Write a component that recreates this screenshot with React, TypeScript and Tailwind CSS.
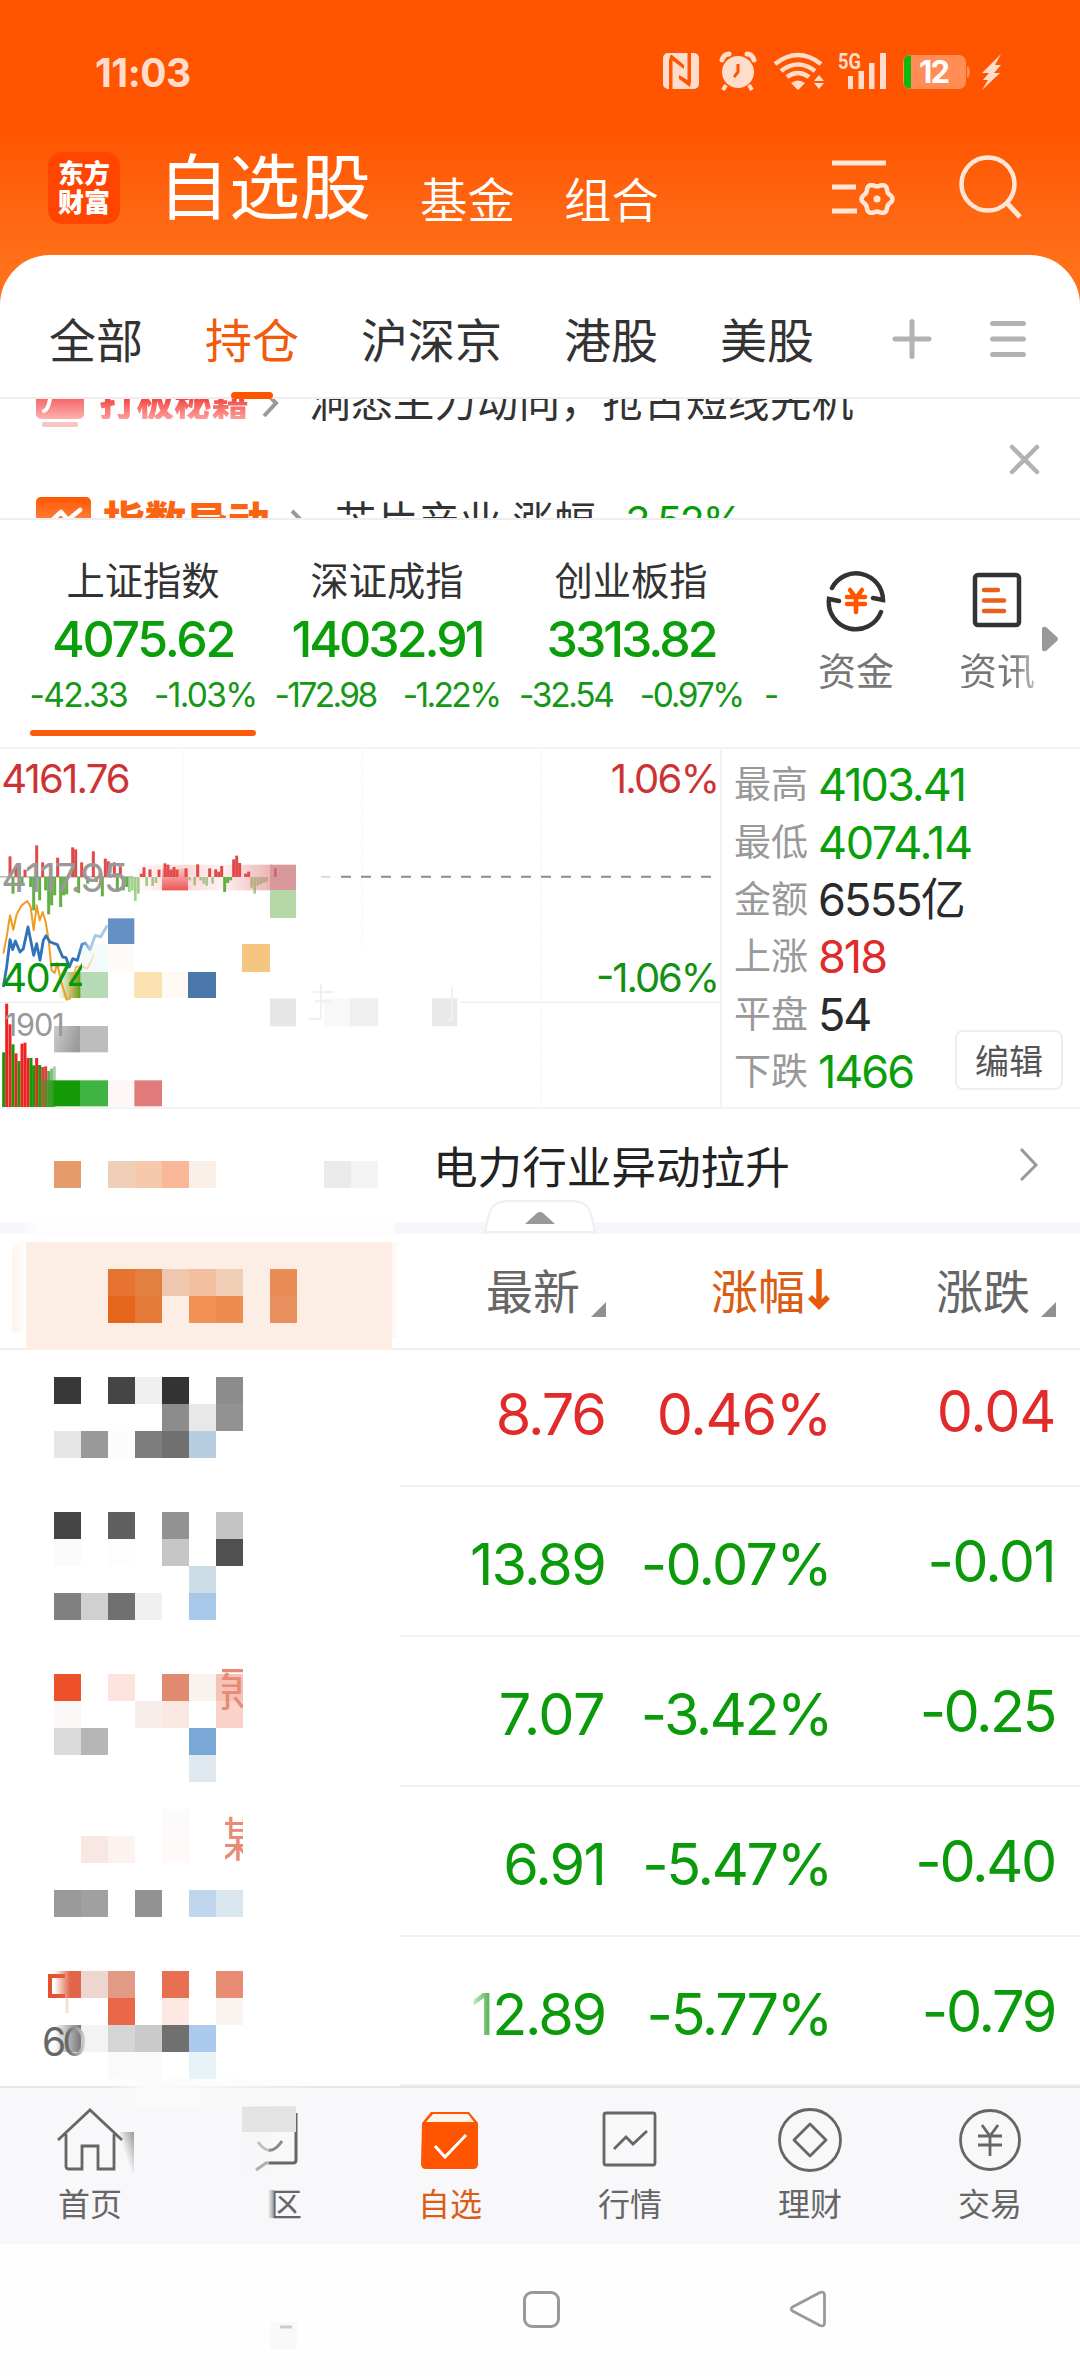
import React from "react";

type Cell = [col: number, row: number, color: string];

const CJK = "font-['Noto_Sans_CJK_SC',sans-serif]";
const NUM = "font-['Inter','Noto_Sans_CJK_SC',sans-serif]";

/* Square tiles on a 27px page grid; x/y is the page position of the drawing's corner. */
function Mosaic({ x, y, w, h, cells, children }: { x: number; y: number; w: number; h: number; cells: Cell[]; children?: React.ReactNode }) {
  return (
    <svg width={w} height={h} viewBox={`${x} ${y} ${w} ${h}`} className="block shrink-0">
      {cells.map(([c, r, color]) => (
        <rect key={`${c}-${r}`} x={c * 27} y={r * 27} width={27} height={27} fill={color} />
      ))}
      {children}
    </svg>
  );
}

function StatusBar() {
  return (
    <div className="flex h-[144px] items-center pl-[95px] text-[#ffdccb]">
      <span className={`${NUM} w-[568px] text-[39px] leading-none font-bold tracking-[-0.5px]`}>11:03</span>
      <svg width="345" height="44" viewBox="663 51 345 44" fill="currentColor">
        <path fillRule="evenodd" d="M668 54h26a5 5 0 0 1 5 5v26a5 5 0 0 1-5 5h-26a5 5 0 0 1-5-5V59a5 5 0 0 1 5-5zm1 7v29h3.500V61.500L684 70v-4l-12-10h-1.500zM691 83V54h-3.500v27L679 76v4l11 8z" />
        <circle cx="738" cy="73" r="16" />
        <path d="M726 86l-3 5M749 86l3 5" stroke="currentColor" strokeWidth="4" />
        <path d="M722 61q2-6 7-6M754 61q-2-6-7-6" stroke="currentColor" strokeWidth="5" fill="none" strokeLinecap="round" />
        <path d="M738 65v8l-4 5" stroke="#ff5500" strokeWidth="3" fill="none" />
        <g fill="none" stroke="currentColor" strokeWidth="4.500">
          <path d="M775 65q23-18 46 0M781 72q17-13 34 0M787 78q11-8 22 0" />
        </g>
        <path d="M791 84q7-5 14 0l-7 7zM814 82l5-6 5 6zM814 84l5 6 5-6z" />
        <text x="838" y="70" fontSize="22" fontWeight="700" fontFamily="Roboto" textLength="23" lengthAdjust="spacingAndGlyphs">5G</text>
        <path d="M848 77h5v13h-5zM858.500 72h5.500v18h-5.500zM869 64h5.500v26H869zM880 54h6v36h-6z" />
        <rect x="903" y="56" width="63" height="34" rx="7" fill="#ff8d55" />
        <path d="M967 67q3 1 3 6t-3 6z" fill="#ff8d55" />
        <path d="M911 56.500v33h-2a5 5 0 0 1-5-5v-23a5 5 0 0 1 5-5z" fill="#0fb80f" />
        <text x="934.500" y="84" textAnchor="middle" fontSize="31" fontWeight="700" fontFamily="Inter" textLength="31" fill="#fff">12</text>
        <path d="M1001 55l-19 19h7l-6 7h5l-6 10 18-17h-6l7-8h-6z" />
      </svg>
    </div>
  );
}

/* Six-lobed outline of the settings wheel, centred on (876, 199). */
const gear = Array.from({ length: 72 }, (_, i) => {
  const a = (i * Math.PI) / 36;
  const r = 14 + 1.5 * Math.cos(6 * a);
  return `${(876 + r * Math.cos(a)).toFixed(2)},${(199 + r * Math.sin(a)).toFixed(2)}`;
}).join(" ");

function TitleBar() {
  return (
    <div className={`${CJK} flex h-[111px] text-white`}>
      <div className="mt-2 ml-12 flex h-[72px] w-[72px] flex-col items-center justify-center rounded-[14px] bg-[#ff4500] pb-1 text-[26px] leading-[29px] font-black">
        <span>东方</span>
        <span>财富</span>
      </div>
      <span className="mt-[3px] ml-[38px] text-[71px] leading-none font-normal">自选股</span>
      <span className="mt-[30px] ml-[49px] text-[47.500px] leading-none font-[350]">基金</span>
      <span className="mt-[30px] ml-[49px] text-[47.500px] leading-none font-[350]">组合</span>
      <svg className="mt-2 ml-[171px]" width="200" height="72" viewBox="829 152 200 72" fill="none" stroke="#ffe6d6" strokeWidth="4.500">
        <path d="M831 163h54M831 187h24M831 211h25" strokeWidth="5" />
        <polygon points={gear} strokeWidth="4.500" strokeLinejoin="round" />
        <circle cx="876" cy="199" r="3.500" fill="#ffe6d6" stroke="none" />
        <circle cx="987" cy="184" r="26.500" />
        <path d="M1006 203l13 14" strokeWidth="5" />
      </svg>
    </div>
  );
}

function Tabs() {
  const tabs = ["全部", "持仓", "沪深京", "港股", "美股"];
  return (
    <div className={`${CJK} flex h-[144px] rounded-t-[50px] border-b-2 border-[#eeeeee] bg-white pl-[49px]`}>
      <div className="flex gap-[62px] pt-[59px] text-[47px] leading-none">
        {tabs.map((t) => (
          <div key={t} className={t === "持仓" ? "flex flex-col items-center text-[#f25a0c]" : "text-[#333333]"}>
            <span>{t}</span>
            {t === "持仓" && <span className="mt-[31px] h-[7px] w-[42px] shrink-0 rounded-full bg-[#ff5500]" />}
          </div>
        ))}
      </div>
      <svg className="mt-[60px] ml-[76px]" width="140" height="50" viewBox="890 315 140 50" stroke="#b2b2b2" strokeWidth="5" strokeLinecap="round">
        <path d="M895 339h34M912 321.500v35M992.500 323.500h31M992.500 339h31M992.500 354.500h31" />
      </svg>
    </div>
  );
}

/* Vertical news carousel caught between two entries, so both lines are cut by the frame. */
function Carousel() {
  return (
    <div className={`${CJK} relative h-[121px] overflow-hidden border-b-2 border-[#eeeeee] bg-white text-[#333333]`}>
      <div className="absolute top-[-19px] left-9 flex h-[48px] items-center text-[41.700px] leading-none">
        <svg width="50" height="48" viewBox="0 0 50 48">
          <defs>
            <linearGradient id="rose" x1="0" y1="0" x2="0" y2="1">
              <stop offset="0.3" stopColor="#f05050" />
              <stop offset="1" stopColor="#ffb0b0" />
            </linearGradient>
          </defs>
          <rect width="48" height="39" rx="5" fill="url(#rose)" />
          <path d="M8 31q4-1 6-12" stroke="#fff" strokeWidth="4" fill="none" strokeLinecap="round" />
          <rect x="6" y="42" width="36" height="5" rx="2" fill="#f9c4c4" />
        </svg>
        <span className="mt-[-8px] ml-[13px] bg-linear-to-b from-[#ee3535] from-40% to-[#ff9c9c] bg-clip-text text-[37.500px] font-black text-transparent">打板秘籍</span>
        <svg className="ml-3" width="20" height="40" viewBox="0 0 20 40" fill="none" stroke="#999" strokeWidth="4">
          <path d="M3 7l12 12L3 32" />
        </svg>
        <span className="mt-[-9px] ml-[28px] tracking-[0.2px]">洞悉主力动向，抢占短线先机</span>
      </div>
      <div className="absolute top-[98px] left-9 flex text-[41.700px] leading-none">
        <svg width="55" height="50" viewBox="0 0 55 50">
          <defs>
            <linearGradient id="amber" x1="0" y1="0" x2="0" y2="1">
              <stop offset="0" stopColor="#ff5500" />
              <stop offset="1" stopColor="#ffb080" />
            </linearGradient>
          </defs>
          <rect width="55" height="50" rx="5" fill="url(#amber)" />
          <path d="M12 27L25 15l7 8 12-10" stroke="#fff" strokeWidth="4.500" fill="none" strokeLinecap="round" strokeLinejoin="round" />
        </svg>
        <span className="ml-[12px] pt-[2px] font-black text-[#fb6411]">指数异动</span>
        <svg className="mt-[7px] ml-[19px]" width="20" height="40" viewBox="0 0 20 40" fill="none" stroke="#999" strokeWidth="4">
          <path d="M3 7l13 13L3 33" />
        </svg>
        <span className="ml-[26px] pt-[2px]">芯片产业</span>
        <span className="ml-[11px] pt-[2px]">涨幅</span>
        <span className={`${NUM} ml-[13px] pt-[4px] text-[41px] tracking-[-2px] text-[#089c08]`}>-3.52%</span>
      </div>
      <svg className="absolute top-[43px] left-[1006px]" width="37" height="37" viewBox="0 0 37 37" stroke="#b2b2b2" strokeWidth="4.500" strokeLinecap="round">
        <path d="M6 5l25 25M31 5L6 30" />
      </svg>
    </div>
  );
}

const indices = [
  { name: "上证指数", value: "4075.62", diff: "-42.33", pct: "-1.03%", active: true, track: "tracking-[-2.300px]", small: "tracking-[-1.700px]" },
  { name: "深证成指", value: "14032.91", diff: "-172.98", pct: "-1.22%", active: false, track: "tracking-[-3px]", small: "tracking-[-2.600px]" },
  { name: "创业板指", value: "3313.82", diff: "-32.54", pct: "-0.97%", active: false, track: "tracking-[-3px]", small: "tracking-[-2.300px]" },
];

function Indices() {
  return (
    <div className="flex h-[229px] border-b-2 border-[#f3f3f3] bg-white pl-[21px]">
      <div className="flex w-[754px]">
        {indices.map((i) => (
          <div key={i.name} className="flex w-[244px] shrink-0 flex-col items-center pt-[40px]">
            <span className={`${CJK} text-[38.300px] leading-none text-[#333333]`}>{i.name}</span>
            <span className={`${NUM} mt-[16px] text-[50px] leading-none font-medium text-[#0a9e0a] ${i.track}`}>{i.value}</span>
            <span className={`${NUM} mt-[15px] flex gap-[27px] text-[33.500px] leading-none text-[#159815] ${i.small}`}>
              <span>{i.diff}</span>
              <span>{i.pct}</span>
            </span>
            {i.active && <span className="mt-[17px] h-[6px] w-[226px] rounded-full bg-[#fa5a0a]" />}
          </div>
        ))}
        <span className={`${NUM} mt-[159px] ml-[11px] text-[33px] leading-none text-[#159815]`}>-</span>
      </div>
      <div className={`${CJK} flex pt-[48px] text-[38px] leading-none text-[#777777]`}>
        <div className="ml-[43px] flex w-[76px] flex-col items-center">
          <svg width="64" height="64" viewBox="824 569 64 64" fill="none" stroke="#333" strokeWidth="4.500" strokeLinecap="round">
            <path d="M832 589A27 27 0 0 1 883 601l-10-2M881 613A27 27 0 0 1 829 600l10 2" />
            <path d="M850 591l6 8 6-8M847 598h18M847 605h18M856 599v14" stroke="#ff5500" strokeWidth="4.500" />
          </svg>
          <span className="mt-[18px]">资金</span>
        </div>
        <div className="ml-[65px] flex w-[76px] flex-col items-center">
          <svg width="64" height="64" viewBox="965 569 64 64" fill="none" stroke="#333" strokeWidth="4.500" strokeLinecap="round">
            <rect x="975" y="576" width="44" height="50" rx="3" />
            <path d="M984 591h14M984 601.500h20M984 612h20" stroke="#e8601c" strokeWidth="4.500" />
          </svg>
          <span className="mt-[18px] bg-linear-to-r from-[#777777] from-70% to-[#bbbbbb] bg-clip-text text-transparent">资讯</span>
        </div>
        <svg className="mt-[57px] ml-[7px]" width="16" height="28" viewBox="0 0 16 28" fill="#999">
          <path d="M0 4q0-3 4-2l11 10q2 2 0 4L4 26q-4 1-4-2z" />
        </svg>
      </div>
    </div>
  );
}

/* Chart data, in thirds of a pixel. */
const ups = [[30, 348], [48, 380], [57, 375], [75, 388], [110, 315], [128, 366], [173, 352], [218, 321], [227, 327], [245, 366], [280, 333], [316, 355], [325, 363], [343, 366], [361, 378], [424, 400], [432, 381], [450, 387], [477, 388], [495, 369], [504, 373], [513, 388], [522, 380], [531, 388], [558, 384], [593, 372], [629, 384], [647, 387], [656, 394], [665, 377], [701, 357], [710, 346], [719, 368], [737, 400], [746, 394]];
const downs = [[39, 460], [66, 430], [92, 440], [101, 510], [119, 480], [137, 450], [146, 522], [155, 495], [164, 465], [182, 500], [191, 465], [200, 462], [236, 458], [263, 430], [289, 425], [307, 468], [352, 455], [370, 450], [380, 440], [674, 455], [683, 428], [692, 420]];
const faint = [[388, 455], [397, 450], [406, 482], [415, 460], [440, 437], [458, 437], [468, 428], [569, 420], [584, 435], [602, 420], [611, 430], [620, 436], [638, 430], [755, 442], [764, 460], [773, 436], [782, 432], [791, 428], [800, 424]];
const volumes: [number, number, string][] = [[11, 936, "#149a06"], [20, 790, "#ee2222"], [30, 852, "#ee2222"], [39, 912, "#149a06"], [48, 939, "#ee2222"], [57, 962, "#149a06"], [66, 910, "#ee2222"], [75, 907, "#ee2222"], [84, 953, "#ee2222"], [93, 953, "#149a06"], [101, 975, "#149a06"], [110, 953, "#ee2222"], [119, 974, "#149a06"], [128, 980, "#e04040"], [137, 978, "#e04040"], [146, 992, "#55ad55"], [155, 985, "#77bd77"], [163, 978, "#a5d5a5"]];
const tiles: [number, number, number, number, string][] = [
  [810, 373, 78, 77, "#d9999b"], [810, 449, 78, 84, "#b5d8a8"], [324, 534, 79, 77, "#6490c4"], [726, 611, 84, 84, "#f4c680"],
  [243, 611, 81, 84, "#f3fafa"], [324, 611, 79, 84, "#fefaf7"], [240, 695, 84, 78, "#b5dab5"], [403, 695, 83, 78, "#f9e2b0"],
  [486, 695, 78, 78, "#fef9f2"], [564, 695, 84, 78, "#4a78aa"], [810, 774, 78, 84, "#e6e6e6"], [972, 774, 78, 84, "#f8f8f8"],
  [1050, 774, 84, 84, "#efefef"], [1296, 774, 76, 84, "#e9e9e9"], [240, 857, 84, 79, "#bdbdbd"], [162, 1020, 78, 78, "#149a06"],
  [240, 1020, 84, 78, "#40b440"], [324, 1020, 79, 78, "#fff7f7"], [403, 1020, 83, 78, "#e27c7c"],
];

function Chart() {
  return (
    <svg width="722" height="358" viewBox="0 26 2166 1074" className="block shrink-0" fontFamily="Inter">
      <defs>
        <linearGradient id="fadeOut" gradientUnits="userSpaceOnUse" x1="200" y1="0" x2="340" y2="0">
          <stop offset="0" stopColor="#2f74b9" />
          <stop offset="0.25" stopColor="#2f74b9" />
          <stop offset="0.5" stopColor="#a9c8e8" />
          <stop offset="1" stopColor="#a9c8e8" />
        </linearGradient>
        <linearGradient id="goldOut" gradientUnits="userSpaceOnUse" x1="200" y1="0" x2="290" y2="0">
          <stop offset="0" stopColor="#f09c20" />
          <stop offset="1" stopColor="#fff0e0" />
        </linearGradient>
        <linearGradient id="blush" x1="0" y1="0" x2="1" y2="0">
          <stop offset="0" stopColor="#f08080" stopOpacity="0" />
          <stop offset="0.4" stopColor="#f08080" stopOpacity="0.3" />
          <stop offset="0.65" stopColor="#f08080" stopOpacity="0.1" />
          <stop offset="1" stopColor="#d9807f" stopOpacity="0.6" />
        </linearGradient>
        <linearGradient id="redTile" x1="0" y1="0" x2="0" y2="1">
          <stop offset="0" stopColor="#ee5555" stopOpacity="0.2" />
          <stop offset="1" stopColor="#ee5555" />
        </linearGradient>
        <linearGradient id="olive" x1="0" y1="0" x2="1" y2="0">
          <stop offset="0" stopColor="#7a9c10" stopOpacity="0" />
          <stop offset="1" stopColor="#6c9c10" />
        </linearGradient>
        <linearGradient id="ash" x1="0" y1="0" x2="1" y2="0.3">
          <stop offset="0" stopColor="#cccccc" />
          <stop offset="1" stopColor="#9c9c9c" />
        </linearGradient>
        <linearGradient id="leaf" x1="0" y1="0" x2="1" y2="0">
          <stop offset="0" stopColor="#4a9a20" stopOpacity="0" />
          <stop offset="1" stopColor="#2a9a18" />
        </linearGradient>
      </defs>
      <g stroke="#ececec" strokeWidth="4">
        <path d="M549 33V370M1086 33V620M1623 33V1098" strokeDasharray="5 5" stroke="#f2f2f2" />
        <path d="M0 786H195M1383 786H2163M2163 28V1102" />
      </g>
      <path d="M1023 409.500H2150" stroke="#8c8c8c" strokeWidth="6" strokeDasharray="30 30" />
      <path d="M963 409.500h28" stroke="#dddddd" strokeWidth="6" />
      <path d="M0 409.500h400" stroke="#aaaaaa" strokeWidth="4" />
      {faint.map(([x, y]) => <rect key={x} x={x - 4} y={410} width={8} height={y - 410} fill="#9fd08c" />)}
      <rect x="390" y="373" width="425" height="77" fill="url(#blush)" />
      <rect x="486" y="385" width="78" height="65" fill="url(#redTile)" />
      {ups.map(([x, y]) => <rect key={x} x={x - 4.500} y={y} width={9} height={410 - y} fill="#e24a4a" />)}
      {downs.map(([x, y]) => <rect key={x} x={x - 4.500} y={410} width={9} height={y - 410} fill="#62b043" />)}
      {volumes.map(([x, y, c]) => <rect key={x} x={x - 4.500} y={y} width={9} height={1102 - y} fill={c} />)}
      {tiles.map(([x, y, w, h, c]) => <rect key={`${x}-${y}`} x={x} y={y} width={w} height={h} fill={c} />)}
      <rect x="822" y="384" width="8" height="26" fill="#cc6668" />
      <rect x="175" y="695" width="66" height="78" fill="url(#olive)" />
      <rect x="162" y="857" width="78" height="79" fill="url(#ash)" />
      <rect x="100" y="1020" width="62" height="80" fill="url(#leaf)" />
      <g fill="none" strokeLinejoin="round">
        <path stroke="url(#goldOut)" strokeWidth="6" d="M10 640L20 590 30 525 40 568 50 522 65 495 82 482 92 500 101 570 110 495 119 540 128 515 137 545 146 600 155 690 164 698 172 668 182 720 200 778 210 775 218 720 228 680 245 678 262 685 275 660 282 640" />
        <path stroke="url(#fadeOut)" strokeWidth="8.500" d="M10 740L20 680 30 598 38 628 46 602 60 635 70 625 84 560 92 600 101 645 110 610 120 660 130 600 138 586 150 605 172 613 188 650 198 652 208 680 218 655 232 660 246 612 256 608 270 628 286 585 302 590 322 555" />
      </g>
      <g fill="none" stroke="#f0f0f0" strokeWidth="6">
        <path d="M963 732V835M940 755h62M945 783h50M925 835h38M1356 740V838M1340 838h16" />
      </g>
      <text x="4" y="158" fontSize="120" textLength="388" fill="#cc3333">4161.76</text>
      <text x="4" y="456" fontSize="120" textLength="380" fill="#999999">4117.95</text>
      <svg x="0" y="640" width="246" height="140" viewBox="0 640 246 140">
        <text x="4" y="755" fontSize="120" textLength="274" fill="#0a960a">4074</text>
      </svg>
      <svg x="0" y="780" width="190" height="140" viewBox="0 780 190 140">
        <text x="14" y="887" fontSize="92" textLength="180" fill="#999999">1901</text>
      </svg>
      <text x="1832" y="158" fontSize="120" textLength="328" fill="#cc3333">1.06%</text>
      <text x="1788" y="756" fontSize="120" textLength="372" fill="#159015">-1.06%</text>
    </svg>
  );
}

const stats = [
  ["最高", "4103.41", "text-[#0a9e0a] tracking-[-2px]"],
  ["最低", "4074.14", "text-[#0a9e0a] tracking-[-1.400px]"],
  ["金额", "6555亿", "text-[#2a2a2a] tracking-[-1.800px]"],
  ["上涨", "818", "text-[#dc2c2c] tracking-[-2px]"],
  ["平盘", "54", "text-[#2a2a2a] tracking-[-2px]"],
  ["下跌", "1466", "text-[#0a9e0a] tracking-[-2px]"],
];

function Market() {
  return (
    <div className="flex h-[358px] bg-white">
      <Chart />
      <div className="relative flex grow flex-col pt-[7px] pl-[12px]">
        {stats.map(([k, v, c]) => (
          <div key={k} className="flex h-[57.400px] items-center">
            <span className={`${CJK} mt-[-4px] w-[84px] text-[37px] leading-none text-[#999999]`}>{k}</span>
            <span className={`${NUM} text-[45px] leading-none ${c}`}>{v}</span>
          </div>
        ))}
        <button className={`${CJK} absolute top-[281px] left-[233px] h-[60px] w-[108px] rounded-[8px] border-2 border-[#eeeeee] bg-white text-[34px] leading-none text-[#555555]`}>编辑</button>
      </div>
    </div>
  );
}

function NewsRow() {
  return (
    <div className="relative flex h-[127px] border-t-2 border-b-12 border-t-[#f3f3f3] border-b-[#f5f7fa] bg-white">
      <Mosaic x={0} y={1109} w={433} h={113} cells={[[2, 43, "#e59a6a"], [4, 43, "#efcfb8"], [5, 43, "#f6c8ac"], [6, 43, "#f8b898"], [7, 43, "#faefe6"], [12, 43, "#eaeaea"], [13, 43, "#f3f3f3"]]} />
      <span className={`${CJK} mt-[34px] w-[587px] text-[44.600px] leading-none text-[#222222]`}>电力行业异动拉升</span>
      <svg className="mt-[37px]" width="20" height="38" viewBox="0 0 20 38" fill="none" stroke="#999" strokeWidth="3">
        <path d="M1 3l15 16L1 34" />
      </svg>
      <svg className="absolute top-[91px] left-[484px]" width="112" height="34" viewBox="0 0 112 34">
        <path d="M1 32L5 14Q9 1 24 1h64q15 0 19 13l4 18z" fill="#fff" stroke="#efefef" strokeWidth="2" />
        <path d="M41 24l12-11q3-2 6 0l12 11z" fill="#999" />
      </svg>
      <div className="absolute top-[107px] left-[20px] h-[20px] w-[375px] bg-linear-to-r from-transparent via-[#fdfdfd] via-5% to-[#fdfdfd] to-98%" />
    </div>
  );
}

function Corner() {
  return (
    <svg width="15" height="15" viewBox="0 0 15 15" className="mt-[48px]" fill="#8f8f94">
      <path d="M15 0v15H0z" />
    </svg>
  );
}

function TableHead() {
  return (
    <div className={`${CJK} flex h-[116px] border-b-2 border-[#efefef] bg-white text-[47px] leading-none text-[#666666]`}>
      <div className="-mb-0.5 flex w-[486px] pt-2 pl-3">
        <div className="h-[90px] w-[14px] rounded-tl-[12px] bg-linear-to-r from-[#fef3ec] to-white" />
        <div className="h-full w-[366px] bg-[#fdeee5]">
          <Mosaic x={26} y={1242} w={366} h={107} cells={[
            [4, 47, "#e67430"], [5, 47, "#e28042"], [6, 47, "#efc6ae"], [7, 47, "#f2c09e"], [8, 47, "#f0ceb6"], [10, 47, "#e98c55"],
            [4, 48, "#e5651a"], [5, 48, "#e67a38"], [7, 48, "#f29056"], [8, 48, "#ee8b50"], [10, 48, "#e7905e"],
          ]} />
        </div>
        <div className="h-[96px] w-[7px] bg-linear-to-r from-[#fef6f1] to-white" />
      </div>
      <div className="flex w-[225px] gap-[11px] pt-[20px]">
        <span className="mt-[11px]">最新</span>
        <Corner />
      </div>
      <div className="flex w-[225px] pt-[31px] text-[#d95c12]">
        <span>涨幅</span>
        <svg width="24" height="44" viewBox="0 0 24 44" className="mt-[3px] ml-[2px]" fill="none" stroke="#e85a08" strokeWidth="5.500">
          <path d="M12 1v36M3 29l9 9 9-9" />
        </svg>
      </div>
      <div className="flex gap-[11px] pt-[20px]">
        <span className="mt-[11px]">涨跌</span>
        <Corner />
      </div>
    </div>
  );
}

type Row = { y: number; h: string; price: string; priceTrack: string; track: string; pct: string; diff: string; color: string; cells: Cell[]; extra?: React.ReactNode };

const rows: Row[] = [
  {
    y: 1350, h: "h-[137px]", price: "8.76", pct: "0.46%", diff: "0.04", color: "text-[#e12a2a]", priceTrack: "tracking-[-2px]", track: "tracking-[-1.300px]",
    cells: [[2, 51, "#383838"], [4, 51, "#454545"], [5, 51, "#f0f0f0"], [6, 51, "#333333"], [8, 51, "#8c8c8c"], [6, 52, "#8c8c8c"], [7, 52, "#e8e8e8"], [8, 52, "#929292"], [2, 53, "#e6e6e6"], [3, 53, "#999999"], [4, 53, "#fcfcfc"], [5, 53, "#7d7d7d"], [6, 53, "#707070"], [7, 53, "#b6cce0"]],
  },
  {
    y: 1487, h: "h-[150px]", price: "13.89", pct: "-0.07%", diff: "-0.01", color: "text-[#0a9a0a]", priceTrack: "tracking-[-1.800px]", track: "tracking-[-1.700px]",
    cells: [[2, 56, "#454545"], [4, 56, "#5f5f5f"], [6, 56, "#929292"], [8, 56, "#c4c4c4"], [2, 57, "#fbfbfb"], [4, 57, "#fdfdfd"], [6, 57, "#c6c6c6"], [8, 57, "#505050"], [7, 58, "#cddde6"], [2, 59, "#808080"], [3, 59, "#d0d0d0"], [4, 59, "#707070"], [5, 59, "#f0f0f0"], [7, 59, "#a8c8ea"]],
  },
  {
    y: 1637, h: "h-[150px]", price: "7.07", pct: "-3.42%", diff: "-0.25", color: "text-[#0a9a0a]", priceTrack: "tracking-[-0.500px]", track: "tracking-[-2.500px]",
    cells: [[2, 62, "#ee502a"], [4, 62, "#fde2de"], [6, 62, "#e28a70"], [7, 62, "#f9f3ef"], [8, 62, "#f5c2b6"], [2, 63, "#fcf8f7"], [5, 63, "#f7eeea"], [6, 63, "#fce8e2"], [8, 63, "#f9d3ca"], [2, 64, "#dadada"], [3, 64, "#b6b6b6"], [7, 64, "#7aa8d6"], [7, 65, "#e0e8f0"]],
    extra: (
      <svg x="222" y="1660" width="21" height="60" viewBox="222 1660 21 60">
        <text x="201" y="1705" fontSize="46" fontFamily="Noto Sans CJK SC" fill="#e88a75">原</text>
      </svg>
    ),
  },
  {
    y: 1787, h: "h-[150px]", price: "6.91", pct: "-5.47%", diff: "-0.40", color: "text-[#0a9a0a]", priceTrack: "tracking-[-1.800px]", track: "tracking-[-2.300px]",
    cells: [[6, 67, "#fdfafb"], [3, 68, "#f7e8e4"], [4, 68, "#fcf2f0"], [6, 68, "#fffaf8"], [2, 70, "#9a9a9a"], [3, 70, "#a0a0a0"], [5, 70, "#929292"], [7, 70, "#c0d6ee"], [8, 70, "#d9e6ee"]],
    extra: (
      <svg x="225" y="1808" width="18" height="60" viewBox="225 1808 18 60">
        <text x="206" y="1856" fontSize="47" fontFamily="Noto Sans CJK SC" fill="#e88a75">煤</text>
      </svg>
    ),
  },
  {
    y: 1937, h: "h-[149px]", price: "12.89", pct: "-5.77%", diff: "-0.79", color: "text-[#0a9a0a]", priceTrack: "tracking-[-2.200px]", track: "tracking-[-2.300px]",
    cells: [[3, 73, "#eed6d0"], [4, 73, "#e29a86"], [6, 73, "#e87052"], [8, 73, "#e88c74"], [4, 74, "#e86848"], [6, 74, "#fde8e4"], [8, 74, "#faf3f0"], [3, 75, "#f3f3f3"], [4, 75, "#d5d5d5"], [5, 75, "#cacaca"], [6, 75, "#707070"], [7, 75, "#accaee"], [4, 76, "#fafafa"], [5, 76, "#fafafa"], [7, 76, "#e8f3f8"]],
    extra: (
      <>
        <defs>
          <linearGradient id="brick"><stop offset="0" stopColor="#e0664a" stopOpacity="0" /><stop offset="0.6" stopColor="#e0664a" /></linearGradient>
          <linearGradient id="slate"><stop offset="0" stopColor="#777" stopOpacity="0" /><stop offset="1" stopColor="#777" /></linearGradient>
          <linearGradient id="code" gradientUnits="userSpaceOnUse" x1="44" y1="0" x2="90" y2="0"><stop offset="0.5" stopColor="#666" /><stop offset="1" stopColor="#eee" /></linearGradient>
        </defs>
        <path d="M65 1976H50v20h15" fill="none" stroke="#e5512e" strokeWidth="4" />
        <path d="M67 1998v15" stroke="#fbdcd4" strokeWidth="3" />
        <rect x="54" y="1971" width="27" height="27" fill="url(#brick)" />
        <rect x="54" y="2025" width="27" height="27" fill="url(#slate)" />
        <text x="42" y="2056" fontSize="39" fontFamily="Inter" textLength="45" fill="url(#code)">60</text>
      </>
    ),
  },
];

function Quotes() {
  return (
    <div className="bg-white">
      {rows.map((r) => (
        <div key={r.y} className={`flex border-b-2 border-[#f0f0f0] ${r.h} ${NUM} text-[57.500px] leading-none ${r.color}`}>
          <div className="-mb-0.5 h-[calc(100%+2px)] w-[400px] overflow-hidden bg-white">
            <Mosaic x={0} y={r.y} w={400} h={150} cells={r.cells}>{r.extra}</Mosaic>
          </div>
          <div className={`flex grow ${r.y === 1350 ? "pt-[36px]" : "pt-[49px]"}`}>
            <div className={`flex w-[205px] justify-end ${r.priceTrack}`}>
              {r.price === "12.89" ? (
                <>
                  <span className="bg-linear-to-r from-[#d4edd4] to-[#3aae3a] bg-clip-text text-transparent">1</span>
                  <span>2.89</span>
                </>
              ) : (
                <span>{r.price}</span>
              )}
            </div>
            <span className={`w-[226px] text-right ${r.track}`}>{r.pct}</span>
            <span className={`-mt-[3px] w-[224px] text-right ${r.track}`}>{r.diff}</span>
          </div>
        </div>
      ))}
    </div>
  );
}

function NavItem({ label, color = "text-[#666666]", children }: { label: React.ReactNode; color?: string; children: React.ReactNode }) {
  return (
    <div className={`${CJK} flex flex-col items-center pt-[18px] text-[32px] leading-none ${color}`}>
      <svg width="80" height="70" viewBox="-40 -35 80 70" fill="none" stroke="currentColor" strokeWidth="2.800">
        {children}
      </svg>
      <span className="mt-[10px]">{label}</span>
    </div>
  );
}

function BottomNav() {
  return (
    <div className="relative grid h-[158px] grid-cols-6 border-t-2 border-[#e6e6e8] bg-[#f8f8fa]">
      <NavItem label="首页">
        <path d="M-32-1L0-31 32-1M-24-7V26a3 3 0 0 0 3 2H-8V5H8V28H24V-7" />
      </NavItem>
      <NavItem label={<><span className="text-transparent">社</span>区</>}>
        <path d="M26-28V19q0 3-3 3H-4L-14 29" strokeWidth="3" />
        <path d="M-12 1Q0 18 12 0" stroke="#888" strokeWidth="3" />
        <path d="M-28-35H26V-9H-28z" fill="#e3e3e3" stroke="none" />
        <path d="M-28-9H-1V35H-28z" fill="#f5f5f7" stroke="none" opacity="0.5" />
      </NavItem>
      <NavItem label="自选" color="text-[#dd5c18]">
        <path d="M-28-18L-19-29H19L28-18V23q0 5-5 5H-24q-5 0-5-5z" fill="#ff5500" stroke="none" />
        <path d="M-24-19L-17-27H18L24-19z" fill="#fff4ec" stroke="none" />
        <path d="M-15 5L-5 16 16-6" stroke="#fff" strokeWidth="3" />
      </NavItem>
      <NavItem label="行情">
        <rect x="-26" y="-28" width="51" height="52" rx="2" />
        <path d="M-16 8L-4-4 3 3 17-10" />
      </NavItem>
      <NavItem label="理财">
        <circle r="30.500" cy="-1" />
        <path d="M0-17L16-1 0 15-16-1z" strokeLinejoin="round" />
      </NavItem>
      <NavItem label="交易">
        <circle r="29.500" cy="-1" />
        <path d="M-8-16L0-5 8-16M-12-5H12M-12 4H12M0-5V15" />
      </NavItem>
      <div className="absolute top-[44px] left-[120px] h-[40px] w-[14px] bg-linear-to-bl from-[#999999] to-transparent to-60%" />
      <div className="absolute -top-[9px] left-[105px] h-[28px] w-[225px] bg-linear-to-r from-transparent via-[#fafafa] via-20% to-transparent" />
      <div className="absolute top-[102px] left-[268px] h-[28px] w-[6px] bg-linear-to-r from-transparent to-[#999999]" />
    </div>
  );
}

function SystemNav() {
  return (
    <div className="flex h-[130px] bg-[#fefefe]">
      <svg className="mt-[74px] ml-[268px]" width="30" height="32" viewBox="0 0 30 32">
        <path d="M2 4h27v27H2z" fill="#f9f9f9" />
        <path d="M12 9h12" stroke="#cccccc" strokeWidth="3" />
      </svg>
      <div className="mt-[47px] ml-[225px] h-[37px] w-[37px] rounded-[9px] border-3 border-[#999999]" />
      <svg className="mt-[46px] ml-[230px]" width="37" height="38" viewBox="0 0 37 38" fill="none" stroke="#999" strokeWidth="2.800" strokeLinejoin="round">
        <path d="M2.500 17L30 2.500Q34.500 1 34.500 5V33Q34.500 37 30 35.500L2.500 21Q0 19 2.500 17z" />
      </svg>
    </div>
  );
}

export default function App() {
  return (
    <div className="h-[2376px] w-[1080px] overflow-hidden bg-white">
      <div className="bg-linear-to-b from-[#ff5500] from-[130px] to-[#ff7019] to-[265px]">
        <StatusBar />
        <TitleBar />
        <Tabs />
      </div>
      <Carousel />
      <Indices />
      <Market />
      <NewsRow />
      <TableHead />
      <Quotes />
      <BottomNav />
      <SystemNav />
    </div>
  );
}
